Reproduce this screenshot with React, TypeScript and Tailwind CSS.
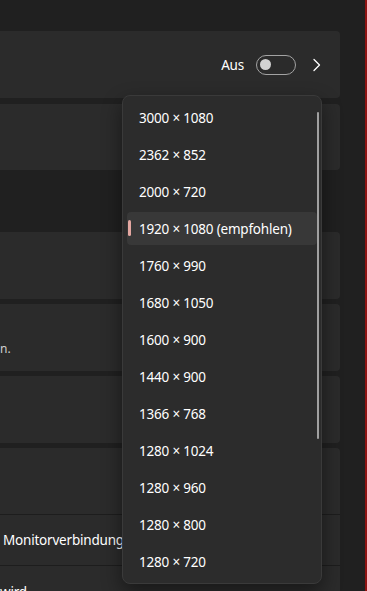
import React from "react";

const items = [
  "3000 × 1080",
  "2362 × 852",
  "2000 × 720",
  "1920 × 1080 (empfohlen)",
  "1760 × 990",
  "1680 × 1050",
  "1600 × 900",
  "1440 × 900",
  "1366 × 768",
  "1280 × 1024",
  "1280 × 960",
  "1280 × 800",
  "1280 × 720",
];

export default function App() {
  return (
    <div
      className="relative w-[367px] h-[591px] overflow-hidden bg-[#202020] flex text-white"
      style={{ fontFamily: '"Segoe UI", "Noto Sans", "Open Sans", sans-serif' }}
    >
      <div className="w-[365px] shrink-0 flex flex-col pt-[31px]">
        {/* card 1 */}
        <div className="w-[340px] h-[67px] shrink-0 bg-[#2b2b2b] rounded-r-[4px] flex items-center justify-end pr-[16px]">
          <span className="text-[13.5px] tracking-[-0.2px] leading-5 mr-[12px]">Aus</span>
          <div className="w-[40px] h-[20px] rounded-full border border-[#a3a3a3] flex items-center pl-[3px]">
            <div className="w-[11px] h-[11px] rounded-full bg-[#d2d2d2]" />
          </div>
          <svg width="16" height="16" viewBox="0 0 16 16" className="ml-[12px]">
            <path d="M6 2.5 L11.5 8 L6 13.5" fill="none" stroke="#ffffff" strokeWidth="1.3" strokeLinecap="round" strokeLinejoin="round" />
          </svg>
        </div>
        {/* card 2 */}
        <div className="w-[340px] h-[66px] shrink-0 mt-[6px] bg-[#2b2b2b] rounded-r-[4px]" />
        {/* section gap */}
        <div className="h-[62px] shrink-0" />
        {/* card 3 */}
        <div className="w-[340px] h-[67px] shrink-0 bg-[#2b2b2b] rounded-r-[4px]" />
        {/* card 4 */}
        <div className="w-[340px] h-[67px] shrink-0 mt-[5px] bg-[#2b2b2b] rounded-r-[4px] pt-[37px]">
          <span className="block text-[12px] leading-4 text-[#cfcfcf]">n.</span>
        </div>
        {/* card 5 */}
        <div className="w-[340px] h-[67px] shrink-0 mt-[5px] bg-[#2b2b2b] rounded-r-[4px]" />
        {/* card 6 expanded */}
        <div className="w-[340px] shrink-0 mt-[5px] bg-[#2b2b2b] rounded-tr-[4px] flex flex-col h-[200px]">
          <div className="h-[67px] shrink-0 border-b border-[#1d1d1d]" />
          <div className="h-[51px] shrink-0 border-b border-[#1d1d1d] flex items-center pl-[3px]">
            <span className="text-[13.5px] tracking-[-0.2px] leading-5 whitespace-nowrap">Monitorverbindung</span>
          </div>
          <div className="pt-[16px]">
            <span className="block text-[13.5px] tracking-[-0.2px] leading-5 whitespace-nowrap">wird</span>
          </div>
        </div>
      </div>
      <div className="w-[2px] h-full shrink-0 bg-[#8e1313]" />

      {/* dropdown overlay */}
      <div className="absolute left-[122px] top-[95px] w-[200px] h-[489px] rounded-[8px] bg-[#2c2c2c] border border-[#3a3a3a] shadow-[0_8px_20px_rgba(0,0,0,0.45)] py-[3px]">
        {items.map((t, i) => {
          const sel = i === 3;
          return (
            <div key={t} className="h-[37px] px-[4px] py-[2px]">
              <div
                className={
                  "relative h-[33px] rounded-[4px] flex items-center pl-[12px] " +
                  (sel ? "bg-[#383838]" : "")
                }
              >
                {sel && (
                  <div className="absolute left-[1px] top-[8px] w-[3px] h-[16px] rounded-full bg-[#e4a7a1]" />
                )}
                <span className="text-[13.5px] tracking-[-0.2px] leading-5 whitespace-nowrap">{t}</span>
              </div>
            </div>
          );
        })}
        <div className="absolute right-[2px] top-[16px] w-[2px] h-[327px] rounded-full bg-[#a0a0a0]" />
      </div>
    </div>
  );
}
